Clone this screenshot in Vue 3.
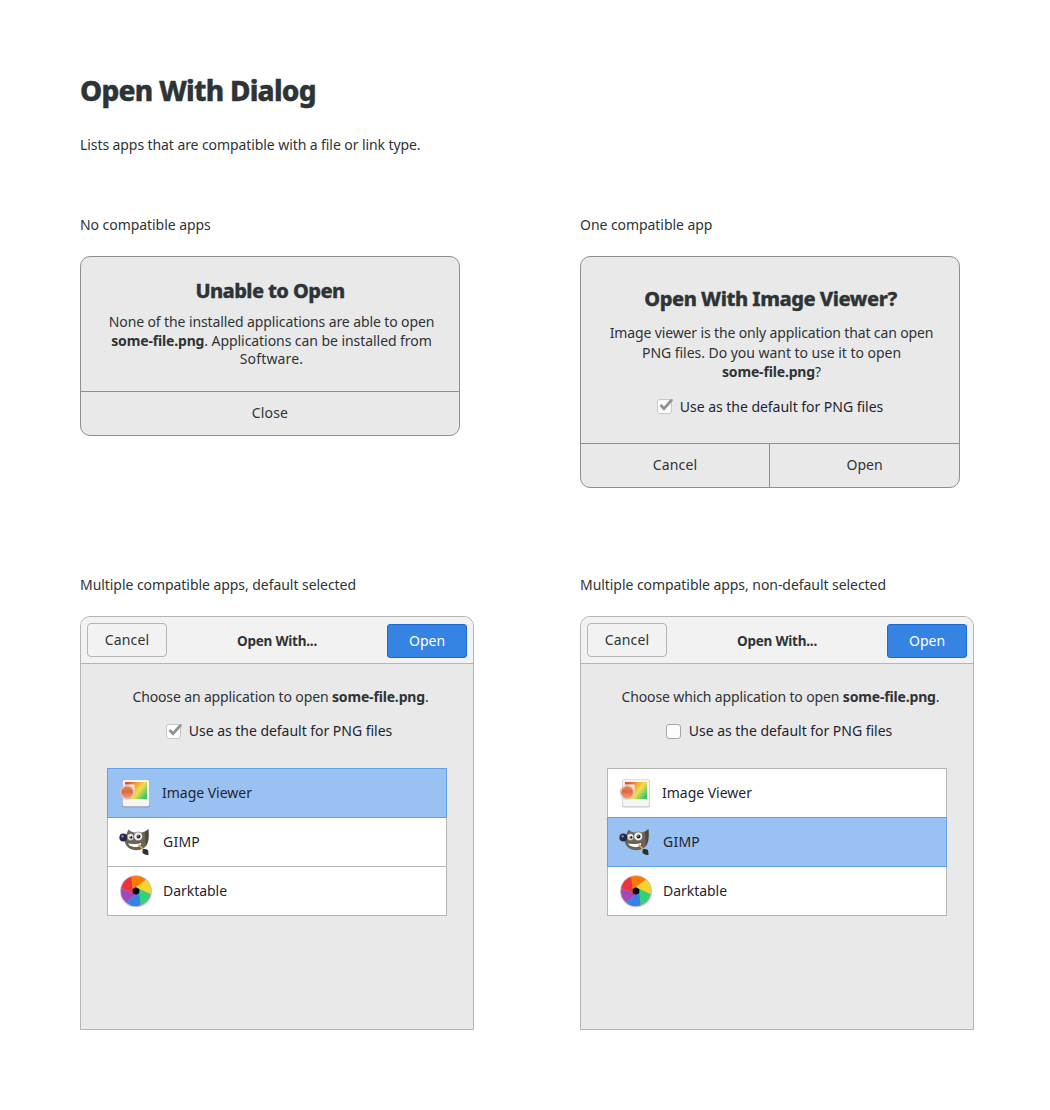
<script setup>
const windows = [
  { key: 'a', label: 'Multiple compatible apps, default selected', prompt: 'Choose an application to open ', checked: true, selected: 0 },
  { key: 'b', label: 'Multiple compatible apps, non-default selected', prompt: 'Choose which application to open ', checked: false, selected: 1 },
]
const apps = [
  { id: 'viewer', name: 'Image Viewer' },
  { id: 'gimp', name: 'GIMP' },
  { id: 'darktable', name: 'Darktable' },
]

// Aperture blades of the Darktable icon, clockwise from the top.
const colors = ['#ff7800', '#f6d32d', '#33d17a', '#3584e4', '#a347ba', '#ed333b']
const polar = (r, deg) => {
  const a = (deg * Math.PI) / 180
  return `${(18 + r * Math.cos(a)).toFixed(2)} ${(18 + r * Math.sin(a)).toFixed(2)}`
}
const blades = colors.map((fill, i) => {
  const start = -108 + i * 60
  const inner = -150 + i * 60
  return { fill, d: `M18 18L${polar(4, inner)}L${polar(15, start)}A15 15 0 0 1 ${polar(15, start + 60)}L${polar(4, inner + 60)}Z` }
})
const hub = [30, 90, 150, 210, 270, 330].map((a) => polar(3.8, a).replace(' ', ',')).join(' ')
</script>

<template>
  <main class="page">
    <h1>Open With Dialog</h1>
    <p class="intro">Lists apps that are compatible with a file or link type.</p>

    <div class="grid first">
      <section>
        <h2>No compatible apps</h2>
        <div class="dialog none">
          <div class="body">
            <h3>Unable to Open</h3>
            <p>
              <span class="line l1">None of the installed applications are able to open</span>
              <span class="line l2"><b>some-file.png</b>. Applications can be installed from</span>
              <span class="line l3">Software.</span>
            </p>
          </div>
          <div class="actions"><button class="close">Close</button></div>
        </div>
      </section>
      <section>
        <h2>One compatible app</h2>
        <div class="dialog one">
          <div class="body">
            <h3>Open With Image Viewer?</h3>
            <p>
              <span class="line l1">Image viewer is the only application that can open</span>
              <span class="line l2">PNG files. Do you want to use it to open</span>
              <span class="line l3"><b>some-file.png</b>?</span>
            </p>
            <label class="check">
              <span class="box on"><svg viewBox="0 0 18 16"><path d="M2.500 8l4.500 4.700L15.700 3V1.200h-2.200L7 8.600 4.500 6z" /></svg></span>
              <span>Use as the default for PNG files</span>
            </label>
          </div>
          <div class="actions">
            <button class="cancel">Cancel</button>
            <button>Open</button>
          </div>
        </div>
      </section>
    </div>

    <div class="grid">
      <section v-for="w in windows" :key="w.key">
        <h2>{{ w.label }}</h2>
        <div class="window">
          <header>
            <button class="btn cancel">Cancel</button>
            <strong>Open With...</strong>
            <button class="btn primary">Open</button>
          </header>
          <p class="prompt">{{ w.prompt }}<b>some-file.png</b>.</p>
          <label class="check">
            <span class="box" :class="{ on: w.checked }">
              <svg v-if="w.checked" viewBox="0 0 18 16"><path d="M2.500 8l4.500 4.700L15.700 3V1.200h-2.200L7 8.600 4.500 6z" /></svg>
            </span>
            <span>Use as the default for PNG files</span>
          </label>
          <ul>
            <li v-for="(app, i) in apps" :key="app.id" :class="[app.id, { selected: i === w.selected }]">
              <svg v-if="app.id === 'viewer'" class="icon" viewBox="0 0 36 36">
                <defs>
                  <linearGradient :id="'pic' + w.key" x1="0" y1="0.2" x2="1" y2="0.8">
                    <stop offset="0" stop-color="#e8452c" />
                    <stop offset=".32" stop-color="#f29a38" />
                    <stop offset=".6" stop-color="#f2df4b" />
                    <stop offset="1" stop-color="#33c566" />
                  </linearGradient>
                  <linearGradient :id="'lens' + w.key" x1="0" y1="0" x2="0" y2="1">
                    <stop offset="0" stop-color="#e8845f" />
                    <stop offset=".45" stop-color="#e2673f" />
                    <stop offset="1" stop-color="#fba06a" />
                  </linearGradient>
                </defs>
                <rect x="4" y="4.300" width="28" height="28.200" rx="2.500" fill="#77767b" opacity=".4" />
                <rect x="4.700" y="4.700" width="26.600" height="26.600" rx="1.800" fill="#f6f5f4" />
                <rect x="7" y="7" width="22" height="17" :fill="`url(#pic${w.key})`" />
                <path d="M7 9.500h9.500v6.500a8 8 0 0 1-8 8H7z" fill="#f6f1ee" />
                <circle cx="9.200" cy="17.300" r="7" fill="#efe9e6" stroke="#b9a7a0" stroke-width=".6" />
                <circle cx="9.200" cy="17.300" r="5.700" :fill="`url(#lens${w.key})`" stroke="#cf6a48" stroke-width=".5" />
              </svg>
              <svg v-else-if="app.id === 'gimp'" class="icon" viewBox="0 0 36 36">
                <path d="M6.500 16C7.500 12 9 9 10.500 5.500 13 8.500 17 9 20.300 8.700 25 8.500 28 7.500 30.300 5 31 12 31 17 29 20.500 26 26 20 26.600 16 26 10 25 7 21 6.500 16z" fill="#6b6558" />
                <path d="M27 8c1.300-.5 2.300-1.500 3.300-3 .6 6 .4 12-2.300 16.500z" fill="#4c473c" />
                <circle cx="12.500" cy="12.900" r="3.500" fill="#eceae6" stroke="#4a463d" stroke-width=".5" />
                <circle cx="20.200" cy="12.400" r="4.400" fill="#f4f3f0" stroke="#4a463d" stroke-width=".5" />
                <circle cx="13" cy="13.300" r="1.400" fill="#222" />
                <circle cx="20.500" cy="12.600" r="2" fill="#222" />
                <circle cx="12.500" cy="12.800" r=".5" fill="#fff" />
                <circle cx="20" cy="11.900" r=".7" fill="#fff" />
                <path d="M9.500 18.800c5 1.300 10 1.100 14-.3.300 3-1.700 4.700-5.200 4.900-4.200.2-7.600-1-8.800-4.600z" fill="#fff" stroke="#3d392f" stroke-width=".6" />
                <circle cx="5.300" cy="13.500" r="3.900" fill="#272743" />
                <circle cx="4.600" cy="12.300" r="1.400" fill="#777bab" />
                <path d="M20.500 20.500l6 6" stroke="#e8a03a" stroke-width="1.700" />
                <path d="M25 25.300c2.500-1 5 0 5.200 1.600l.3 4.100c-3 .3-6-1-6.200-2.900z" fill="#29302f" />
              </svg>
              <svg v-else class="icon" viewBox="0 0 36 36">
                <circle cx="18" cy="18.200" r="16" fill="#c4c1bd" />
                <path v-for="b in blades" :key="b.fill" :d="b.d" :fill="b.fill" />
                <polygon :points="hub" fill="#000" />
              </svg>
              <span>{{ app.name }}</span>
            </li>
          </ul>
        </div>
      </section>
    </div>
  </main>
</template>

<style>
body { background: #fff; }
</style>
<style scoped>
.page {
  box-sizing: border-box;
  width: 1050px;
  height: 1110px;
  padding: 72px 76px 0 80px;
  font: 14px/20px "Noto Sans", sans-serif;
  color: #2e3436;
}
h1 {
  margin: 0;
  font-size: 28px;
  line-height: 36px;
  font-weight: 800;
  letter-spacing: -0.78px;
  white-space: nowrap;
  -webkit-text-stroke: 0.4px #2e3436;
}
.intro { margin: 27px 0 0; letter-spacing: -0.083px; }
.grid { display: grid; grid-template-columns: 394px 394px; column-gap: 106px; }
.grid.first { height: 360px; margin-top: 60px; }
h2 { margin: 0 0 21px; font-size: 14px; font-weight: 400; line-height: 20px; letter-spacing: -0.055px; white-space: nowrap; }
b { font-weight: 700; letter-spacing: -0.163px; }
button { padding: 0; margin: 0; border: 0; background: none; font: inherit; color: inherit; }
.cancel { letter-spacing: 0.15px; }

.dialog {
  box-sizing: border-box;
  display: flex;
  flex-direction: column;
  width: 380px;
  border: 1px solid #8f8f8f;
  border-radius: 10px;
  background: #e9e9e9;
  text-align: center;
}
.none { height: 180px; }
.one { height: 232px; }
.body { flex: 1; }
h3 {
  margin: 0;
  font-size: 20px;
  font-weight: 800;
  line-height: 28px;
  letter-spacing: -0.6px;
  white-space: nowrap;
  -webkit-text-stroke: 0.3px #2e3436;
}
.dialog p { margin: 0; padding-left: 3px; }
.line { display: block; white-space: nowrap; }
.none h3 { padding-top: 20px; }
.dialog.none p { margin-top: 8px; line-height: 18.500px; }
.none .l1 { letter-spacing: -0.108px; }
.none .l2 { letter-spacing: -0.06px; }
.none .l3, .close { letter-spacing: 0.16px; }
.one h3 { padding: 28px 0 0 1px; letter-spacing: -0.456px; }
.dialog.one p { margin-top: 10px; line-height: 19.500px; }
.one .l1 { letter-spacing: -0.135px; }
.one .l2 { letter-spacing: -0.039px; }
.actions { display: flex; height: 43px; border-top: 1px solid #8f8f8f; }
.actions button { flex: 1; padding-bottom: 1px; }
.actions button + button { border-left: 1px solid #8f8f8f; }
.one .actions button:first-child { flex: 0 0 188px; }

.check { display: flex; justify-content: center; align-items: center; height: 20px; color: #241f31; letter-spacing: -0.03px; }
.one .check { margin-top: 15px; }
.box { box-sizing: border-box; width: 15px; height: 15px; margin-right: 8px; border: 1px solid #a6a6a6; border-radius: 3px; background: #fcfcfc; }
.box.on { border-color: #c8c8c8; }
.box svg { display: block; width: 18px; height: 16px; margin: -2px 0 0 -1px; fill: #929292; overflow: visible; }

.window {
  box-sizing: border-box;
  width: 394px;
  height: 414px;
  border: 1px solid #b5b5b5;
  border-radius: 10px 10px 0 0;
  background: #e9e9e9;
  overflow: hidden;
}
header {
  box-sizing: border-box;
  display: flex;
  justify-content: space-between;
  align-items: flex-start;
  height: 47px;
  padding: 6px 6px 0;
  border-bottom: 1px solid #b5b5b5;
  background: #f2f2f2;
}
header strong { font-weight: 700; font-size: 13.500px; line-height: 36px; letter-spacing: -0.22px; }
.btn { box-sizing: border-box; width: 80px; height: 34px; border: 1px solid #b5b5b5; border-radius: 4px; }
.btn.primary { margin-top: 1px; border-color: #1b6ad4; border-radius: 3px; background: #3584e4; color: #fff; }
.prompt { margin: 23px 0 0 7px; text-align: center; white-space: nowrap; letter-spacing: -0.135px; }
.window .check { margin: 14px 0 0 4px; }

ul { display: flex; flex-direction: column; list-style: none; margin: 27px 26px 0; padding: 0; }
li {
  box-sizing: border-box;
  display: flex;
  align-items: center;
  height: 50px;
  padding-left: 10px;
  border: 1px solid #b5b5b5;
  background: #fff;
  color: #241f31;
}
li + li { margin-top: -1px; }
li.selected { position: relative; border-color: #62a0ea; background: #99c1f1; }
.icon { width: 36px; height: 36px; margin-right: 9px; }
.viewer .icon { margin-right: 8px; }
.viewer { letter-spacing: -0.02px; }
.gimp { letter-spacing: 0.22px; }
.darktable { letter-spacing: -0.04px; }
</style>
